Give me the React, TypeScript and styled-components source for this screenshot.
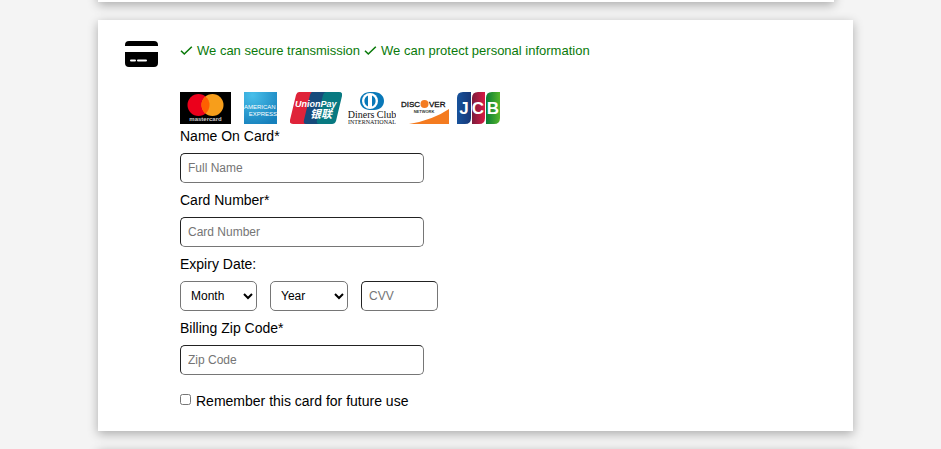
import React from "react";
import styled, { createGlobalStyle } from "styled-components";

const GlobalStyle = createGlobalStyle`
  *, *::before, *::after { box-sizing: border-box; }
  body {
    margin: 0;
    background: #f4f4f4;
    color: #000;
    font-family: "Liberation Sans", Arial, sans-serif;
    font-size: 14px;
  }
`;

const Page = styled.main`
  display: flex;
  flex-direction: column;
  gap: 18px;
  max-height: 100vh;
  overflow: hidden;
  padding: 0 88px 0 98px;
`;

const Panel = styled.section`
  flex: none;
  background: #fff;
  box-shadow: 0 3px 10px rgba(0, 0, 0, 0.3);
`;

const PreviousPanel = styled(Panel)`
  height: 42px;
  margin: -40px 19px 0 0;
`;

const NextPanel = styled(Panel)`
  height: 40px;
`;

const PaymentPanel = styled(Panel)`
  display: flex;
  gap: 22px;
  padding: 21px 27px 20px;
`;

const CardIcon = styled.svg`
  flex: none;
  width: 33px;
  height: 26px;
`;

const Content = styled.form`
  flex: 1;
  min-width: 0;
`;

const Assurances = styled.ul`
  display: flex;
  gap: 4px;
  margin: 0;
  padding: 2px 0 0;
  list-style: none;
  color: #0a7a0a;
  font-size: 13px;
  line-height: 16px;
`;

const Assurance = styled.li`
  display: flex;
  align-items: center;
  gap: 4px;
`;

const Check = styled.svg`
  width: 13px;
  height: 10px;
`;

const Brands = styled.div`
  display: flex;
  margin: 33px 0 1px;
  height: 32px;
`;

const Brand = styled.svg<{ $width: number; $gap: number }>`
  flex: none;
  width: ${(p) => p.$width}px;
  height: 32px;
  margin-right: ${(p) => p.$gap}px;
`;

const Field = styled.div`
  display: flex;
  flex-direction: column;
  gap: 7px;
  padding-top: 1px;
  margin-bottom: 6px;
`;

const FieldSet = styled.fieldset`
  border: 0;
  margin: 0 0 6px;
  padding: 0;
`;

const labelStyle = `
  font-size: 14px;
  line-height: 20px;
`;

const Label = styled.label`
  ${labelStyle}
  align-self: flex-start;
`;

const Legend = styled.legend`
  ${labelStyle}
  padding: 1px 0 7px;
`;

const Input = styled.input<{ $width: number }>`
  width: ${(p) => p.$width}px;
  max-width: 100%;
  height: 30px;
  padding: 0 7px;
  border: 1px solid;
  border-color: #222 #767676 #767676 #222;
  border-radius: 5px;
  background: #fff;
  font: 12px "Liberation Sans", Arial, sans-serif;
  &::placeholder { color: #757575; opacity: 1; }
`;

const Expiry = styled.div`
  display: flex;
  gap: 13px;
`;

const Select = styled.select<{ $width: number }>`
  width: ${(p) => p.$width}px;
  height: 30px;
  padding: 0 0 0 6px;
  border: 1px solid #767676;
  border-radius: 5px;
  background: #fff;
  color: #000;
  font: 12px "Liberation Sans", Arial, sans-serif;
`;

const Remember = styled.label`
  display: flex;
  align-items: center;
  width: fit-content;
  gap: 5px;
  margin-top: 16px;
  line-height: 20px;
`;

const Checkbox = styled.input`
  width: 11px;
  height: 11px;
  margin: 0 0 3px;
`;

const sans = '"Liberation Sans", Arial, sans-serif';
const serif = '"Liberation Serif", "Times New Roman", serif';

function Tick() {
  return (
    <Check viewBox="0 0 13 10" aria-hidden="true">
      <path d="M1 4.7 4.3 8 11.8 .7" fill="none" stroke="#0a7a0a" strokeWidth="1.6" />
    </Check>
  );
}

function Mastercard() {
  return (
    <Brand $width={51} $gap={13} viewBox="0 0 51 32" role="img" aria-label="Mastercard">
      <rect width="51" height="32" />
      <circle cx="18.5" cy="13" r="11" fill="#eb001b" />
      <circle cx="32.5" cy="13" r="11" fill="#f79e1b" />
      <path d="M25.5 4.5a11 11 0 0 1 0 17 11 11 0 0 1 0-17" fill="#ff5f00" />
      <text x="25.5" y="29" fill="#ccc" fontFamily={sans} fontSize="6" fontWeight="bold" textAnchor="middle">mastercard</text>
    </Brand>
  );
}

function Amex() {
  return (
    <Brand $width={33} $gap={13} viewBox="0 0 33 32" role="img" aria-label="American Express">
      <defs>
        <radialGradient id="amex" cx="25%" cy="10%" r="100%">
          <stop offset="0" stopColor="#48bfea" />
          <stop offset="1" stopColor="#1680bc" />
        </radialGradient>
      </defs>
      <rect width="33" height="32" fill="url(#amex)" />
      <g fill="#fff" fontFamily={sans} fontSize="6">
        <text x="0" y="17">AMERICAN</text>
        <text x="33" y="24" textAnchor="end">EXPRESS</text>
      </g>
    </Brand>
  );
}

function UnionPay() {
  return (
    <Brand $width={52} $gap={6} viewBox="0 0 52 32" role="img" aria-label="UnionPay">
      <path d="M9 0h14l-7 32H3q-4 0-3-4L6 3q1-3 3-3" fill="#df2339" />
      <path d="M22 0h15l-7 32H16q-3 0-2-4L20 3q1-3 2-3" fill="#174b7b" />
      <path d="M36 0h13q4 0 3 4l-6 25q-1 3-4 3H29q-3 0-2-4L33 3q1-3 3-3" fill="#087981" />
      <text x="5" y="15" fill="#fff" fontFamily={sans} fontSize="9" fontStyle="italic" fontWeight="bold">UnionPay</text>
      <text x="20" y="26" fill="#fff" fontFamily='"Noto Sans CJK SC", sans-serif' fontSize="11" fontStyle="italic" fontWeight="bold">银联</text>
    </Brand>
  );
}

function DinersClub() {
  return (
    <Brand $width={48} $gap={5} viewBox="0 0 48 32" role="img" aria-label="Diners Club International">
      <path d="M22 0h4c6 0 10 4 10 9s-4 9-10 9h-4c-6 0-10-4-10-9s4-9 10-9" fill="#0878b8" />
      <circle cx="22" cy="9" r="8" fill="#fff" />
      <path d="M20 3.5a6 6 0 0 0 0 11zM24 3.5a6 6 0 0 1 0 11z" fill="#0878b8" />
      <text x="24" y="26" fill="#111" fontFamily={serif} fontSize="10" textAnchor="middle">Diners Club</text>
      <text x="24" y="32" fill="#111" fontFamily={serif} fontSize="6" textAnchor="middle">INTERNATIONAL</text>
    </Brand>
  );
}

function Discover() {
  return (
    <Brand $width={48} $gap={8} viewBox="0 0 48 32" role="img" aria-label="Discover Network">
      <g fill="#111" stroke="#111" strokeWidth=".3" fontFamily={sans} fontSize="8">
        <text x="0" y="15">DISC</text>
        <text x="28" y="15">VER</text>
      </g>
      <circle cx="23.5" cy="12" r="4" fill="#f47b20" />
      <text x="23" y="21" fill="#333" fontFamily={sans} fontSize="4" fontWeight="bold" textAnchor="middle">NETWORK</text>
      <path d="M48 17v15H8q24-4 40-15" fill="#f47b20" />
    </Brand>
  );
}

function Jcb() {
  return (
    <Brand $width={43} $gap={0} viewBox="0 0 43 32" role="img" aria-label="JCB">
      <defs>
        <linearGradient id="jcb-blue">
          <stop offset="0" stopColor="#17529b" />
          <stop offset="1" stopColor="#173878" />
        </linearGradient>
        <linearGradient id="jcb-red">
          <stop offset="0" stopColor="#7a1c3c" />
          <stop offset="1" stopColor="#d81945" />
        </linearGradient>
        <linearGradient id="jcb-green">
          <stop offset="0" stopColor="#087b36" />
          <stop offset="1" stopColor="#55b62b" />
        </linearGradient>
      </defs>
      <path d="M6 0h8v26q0 6-6 6H0V6q0-6 6-6" fill="url(#jcb-blue)" />
      <path d="M21 0h7v26q0 6-6 6h-7V6q0-6 6-6" fill="url(#jcb-red)" />
      <path d="M35 0h8v26q0 6-6 6h-8V6q0-6 6-6" fill="url(#jcb-green)" />
      <g fill="#fff" fontFamily={sans} fontSize="17" fontWeight="bold" textAnchor="middle">
        <text x="7" y="22">J</text>
        <text x="21" y="22">C</text>
        <text x="36" y="22">B</text>
      </g>
    </Brand>
  );
}

export default function App() {
  return (
    <>
      <GlobalStyle />
      <Page>
        <PreviousPanel />
        <PaymentPanel>
          <CardIcon viewBox="0 0 33 26" aria-hidden="true">
            <path d="M4 0h25q4 0 4 4v1H0V4q0-4 4-4M0 11h33v11q0 4-4 4H4q-4 0-4-4z" />
            <path d="M6 19.5h4M13 19.5h8" stroke="#fff" strokeWidth="2" strokeLinecap="round" />
          </CardIcon>
          <Content>
            <Assurances>
              <Assurance><Tick />We can secure transmission</Assurance>
              <Assurance><Tick />We can protect personal information</Assurance>
            </Assurances>
            <Brands>
              <Mastercard />
              <Amex />
              <UnionPay />
              <DinersClub />
              <Discover />
              <Jcb />
            </Brands>
            <Field>
              <Label htmlFor="name">Name On Card*</Label>
              <Input id="name" $width={244} placeholder="Full Name" />
            </Field>
            <Field>
              <Label htmlFor="number">Card Number*</Label>
              <Input id="number" $width={244} placeholder="Card Number" inputMode="numeric" />
            </Field>
            <FieldSet>
              <Legend>Expiry Date:</Legend>
              <Expiry>
                <Select $width={77} aria-label="Month"><option>Month</option></Select>
                <Select $width={78} aria-label="Year"><option>Year</option></Select>
                <Input $width={77} placeholder="CVV" aria-label="CVV" />
              </Expiry>
            </FieldSet>
            <Field>
              <Label htmlFor="zip">Billing Zip Code*</Label>
              <Input id="zip" $width={244} placeholder="Zip Code" />
            </Field>
            <Remember>
              <Checkbox type="checkbox" />
              Remember this card for future use
            </Remember>
          </Content>
        </PaymentPanel>
        <NextPanel />
      </Page>
    </>
  );
}
